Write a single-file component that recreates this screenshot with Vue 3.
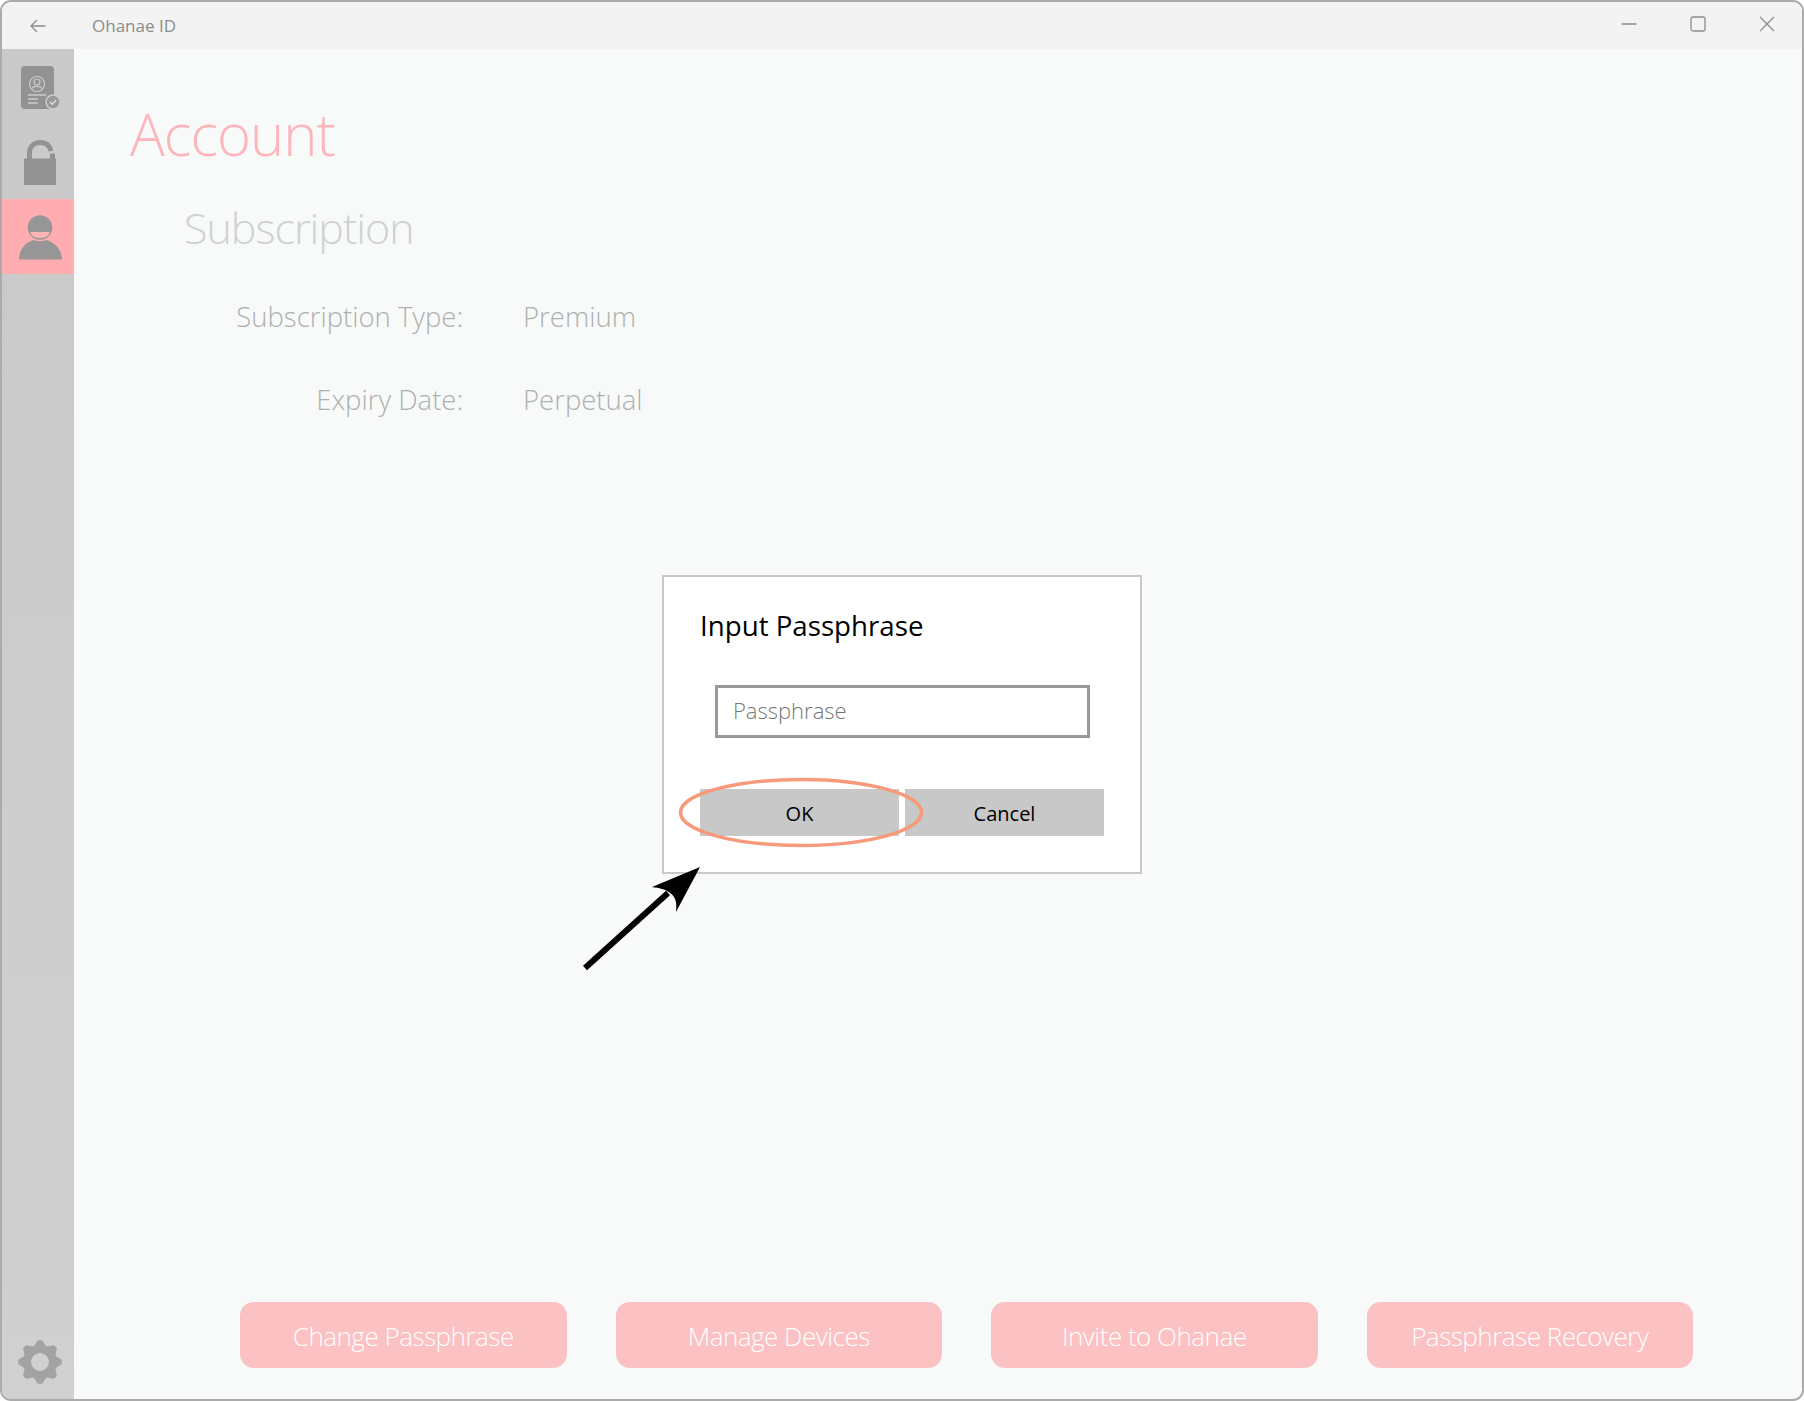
<script setup>
const rows = [
  { label: 'Subscription Type:', value: 'Premium' },
  { label: 'Expiry Date:', value: 'Perpetual' },
]
const actions = ['Change Passphrase', 'Manage Devices', 'Invite to Ohanae', 'Passphrase Recovery']
const teeth = [0, 45, 90, 135, 180, 225, 270, 315]
</script>

<template>
  <div class="window">
    <header class="titlebar">
      <svg width="16" height="14" viewBox="0 0 16 14" fill="none" stroke="#8c8c8c" stroke-width="1.3">
        <path d="M15.5 7H1M7 1 1 7l6 6" />
      </svg>
      <span class="app-name">Ohanae ID</span>
      <div class="controls">
        <svg width="16" height="16" viewBox="0 0 16 16" fill="none" stroke="#8c8c8c" stroke-width="1.3"><path d="M0.5 8h15" /></svg>
        <svg width="16" height="16" viewBox="0 0 16 16" fill="none" stroke="#8c8c8c" stroke-width="1.3"><rect x="1" y="1" width="14" height="14" rx="2" /></svg>
        <svg width="16" height="16" viewBox="0 0 16 16" fill="none" stroke="#8c8c8c" stroke-width="1.3"><path d="M1 1l14 14M15 1 1 15" /></svg>
      </div>
    </header>
    <div class="body">
      <nav class="sidebar">
        <div class="tile">
          <svg width="48" height="53" viewBox="16 60 48 53">
            <rect x="21" y="66" width="33" height="43" rx="4" fill="#929292" />
            <circle cx="37" cy="84" r="7.500" fill="none" stroke="#cbcbcb" stroke-width="1.200" />
            <circle cx="37" cy="82" r="3" fill="none" stroke="#cbcbcb" stroke-width="1.200" />
            <path d="M31.500 89c1.500-3.500 9.500-3.500 11 0" fill="none" stroke="#cbcbcb" stroke-width="1.200" />
            <path d="M28 95h18M28 99h10M28 103h10" stroke="#cbcbcb" stroke-width="1.400" />
            <circle cx="53" cy="102" r="7" fill="#999" stroke="#cbcbcb" stroke-width="1.500" />
            <path d="M50 102l2.200 2.400 4-4.400" fill="none" stroke="#dcdcdc" stroke-width="1.400" />
          </svg>
        </div>
        <div class="tile">
          <svg width="48" height="53" viewBox="16 135 48 53">
            <path d="M29.500 159v-6c0-6.500 4.500-10.500 11-10.500 5 0 9 2.500 10.500 8.500" fill="none" stroke="#929292" stroke-width="5" />
            <path d="M24 158.500h26v-5h5v5h1V185H24z" fill="#929292" />
          </svg>
        </div>
        <div class="tile active">
          <svg width="48" height="53" viewBox="16 210 48 53">
            <path d="M19 259.500c0-10 7-18 15-19.500h12c8 1.500 16 9.500 16 19.500z" fill="#969696" />
            <circle cx="40" cy="227.500" r="13" fill="#969696" stroke="#ffadb0" stroke-width="1.500" />
            <path d="M30.500 232h19c-.5 4-4.500 6-9.500 6s-9-2-9.500-6z" fill="#ffb4b7" />
          </svg>
        </div>
        <div class="gear">
          <svg width="48" height="48" viewBox="16 1338 48 48">
            <g transform="translate(40 1362)">
              <circle r="17" fill="#a3a3a3" />
              <path
                v-for="t in teeth"
                :key="t"
                d="M-5-15-1.500-20.500h3L5-15z"
                fill="#a3a3a3"
                stroke="#a3a3a3"
                stroke-width="2.500"
                stroke-linejoin="round"
                :transform="`rotate(${t})`"
              />
              <circle r="9" fill="#d0d0d0" />
            </g>
          </svg>
        </div>
      </nav>
      <main class="content">
        <h1 class="title">Account</h1>
        <h2 class="subtitle">Subscription</h2>
        <dl class="details">
          <div v-for="r in rows" :key="r.label" class="row">
            <dt>{{ r.label }}</dt>
            <dd>{{ r.value }}</dd>
          </div>
        </dl>
        <div class="actions">
          <button v-for="a in actions" :key="a" class="action">{{ a }}</button>
        </div>
      </main>
    </div>
    <div class="dialog">
      <div class="dialog-title">Input Passphrase</div>
      <div class="field">Passphrase</div>
      <div class="dialog-buttons">
        <button class="dlg-btn">OK</button>
        <button class="dlg-btn">Cancel</button>
      </div>
    </div>
    <svg class="annotation" width="1804" height="1401" viewBox="0 0 1804 1401" fill="none">
      <ellipse cx="801" cy="812.500" rx="120.500" ry="33" stroke="#f79a7c" stroke-width="3.500" />
      <path d="M585 968 668 893" stroke="#000" stroke-width="6" />
      <path d="M700 867 676 912C677 903 676 897 670 893 665 889 659 888 652 887z" fill="#000" />
    </svg>
  </div>
</template>

<style>
html, body { margin: 0; background: #fff; }
</style>

<style scoped>
.window {
  position: relative;
  box-sizing: border-box;
  width: 1804px;
  height: 1401px;
  border: 2px solid #ababab;
  border-radius: 11px;
  overflow: hidden;
  display: flex;
  flex-direction: column;
  font-family: "Open Sans", "Liberation Sans", sans-serif;
  background: #f8faf9;
}
.titlebar {
  height: 47px;
  flex: none;
  display: flex;
  align-items: center;
  background: #f3f3f3;
  padding-left: 28px;
}
.app-name {
  margin-left: 46px;
  font-size: 17px;
  color: #8c8c8c;
}
.controls {
  margin-left: auto;
  display: flex;
  gap: 53px;
  padding-right: 27px;
  margin-top: -4px;
}
.body {
  flex: 1;
  display: flex;
  min-height: 0;
}
.sidebar {
  width: 72px;
  flex: none;
  background: linear-gradient(#c9c9c9, #d0d0d0);
  display: flex;
  flex-direction: column;
}
.tile {
  box-sizing: border-box;
  height: 75px;
  padding-left: 4px;
  display: flex;
  align-items: center;
  justify-content: center;
}
.tile.active { background: #ffadb0; }
.gear {
  box-sizing: border-box;
  margin-top: auto;
  height: 70px;
  padding: 0 0 4px 4px;
  display: flex;
  align-items: center;
  justify-content: center;
}
.content {
  flex: 1;
  padding: 49px 109px 31px 56px;
  display: flex;
  flex-direction: column;
}
.title {
  margin: 0;
  font-size: 58px;
  line-height: 72px;
  font-weight: 300;
  letter-spacing: -1px;
  color: #fdb5ba;
}
.subtitle {
  margin: 29.500px 0 0 54px;
  font-size: 43px;
  line-height: 56px;
  font-weight: 300;
  letter-spacing: -1px;
  color: #cfd2d1;
}
.details {
  margin: 19px 0 0;
}
.row {
  display: flex;
  align-items: center;
  height: 83px;
  font-size: 27.500px;
  font-weight: 300;
  color: #adb0af;
}
.row dt { width: 333px; text-align: right; }
.row dd { margin: 0 0 0 60px; }
.actions {
  margin-top: auto;
  display: flex;
  justify-content: space-between;
  padding-left: 110px;
}
.action {
  width: 326.500px;
  height: 66px;
  border: none;
  border-radius: 14px;
  padding: 2px 0 0;
  background: #fbc1c3;
  color: #fff;
  font: 300 26px "Open Sans", "Liberation Sans", sans-serif;
  letter-spacing: -0.500px;
}
.dialog {
  position: absolute;
  left: 660px;
  top: 573px;
  width: 480px;
  height: 299px;
  box-sizing: border-box;
  border: 2px solid #c8c8c8;
  background: #fff;
  display: flex;
  flex-direction: column;
}
.dialog-title {
  margin: 28px 0 0 36px;
  font-size: 27.700px;
  line-height: 40px;
  color: #000;
}
.field {
  margin: 40px 0 0 51px;
  box-sizing: border-box;
  width: 375px;
  height: 53px;
  border: 3px solid #999;
  padding-left: 15px;
  font-size: 22px;
  font-weight: 300;
  line-height: 45px;
  color: #777;
}
.dialog-buttons {
  margin: 51px 0 0 36px;
  display: flex;
  gap: 6px;
}
.dlg-btn {
  width: 199px;
  height: 47px;
  border: none;
  padding: 1px 0 0;
  background: #c8c8c8;
  color: #000;
  font: 400 20px "Open Sans", "Liberation Sans", sans-serif;
}
.annotation {
  position: absolute;
  left: -2px;
  top: -2px;
  pointer-events: none;
}
</style>
